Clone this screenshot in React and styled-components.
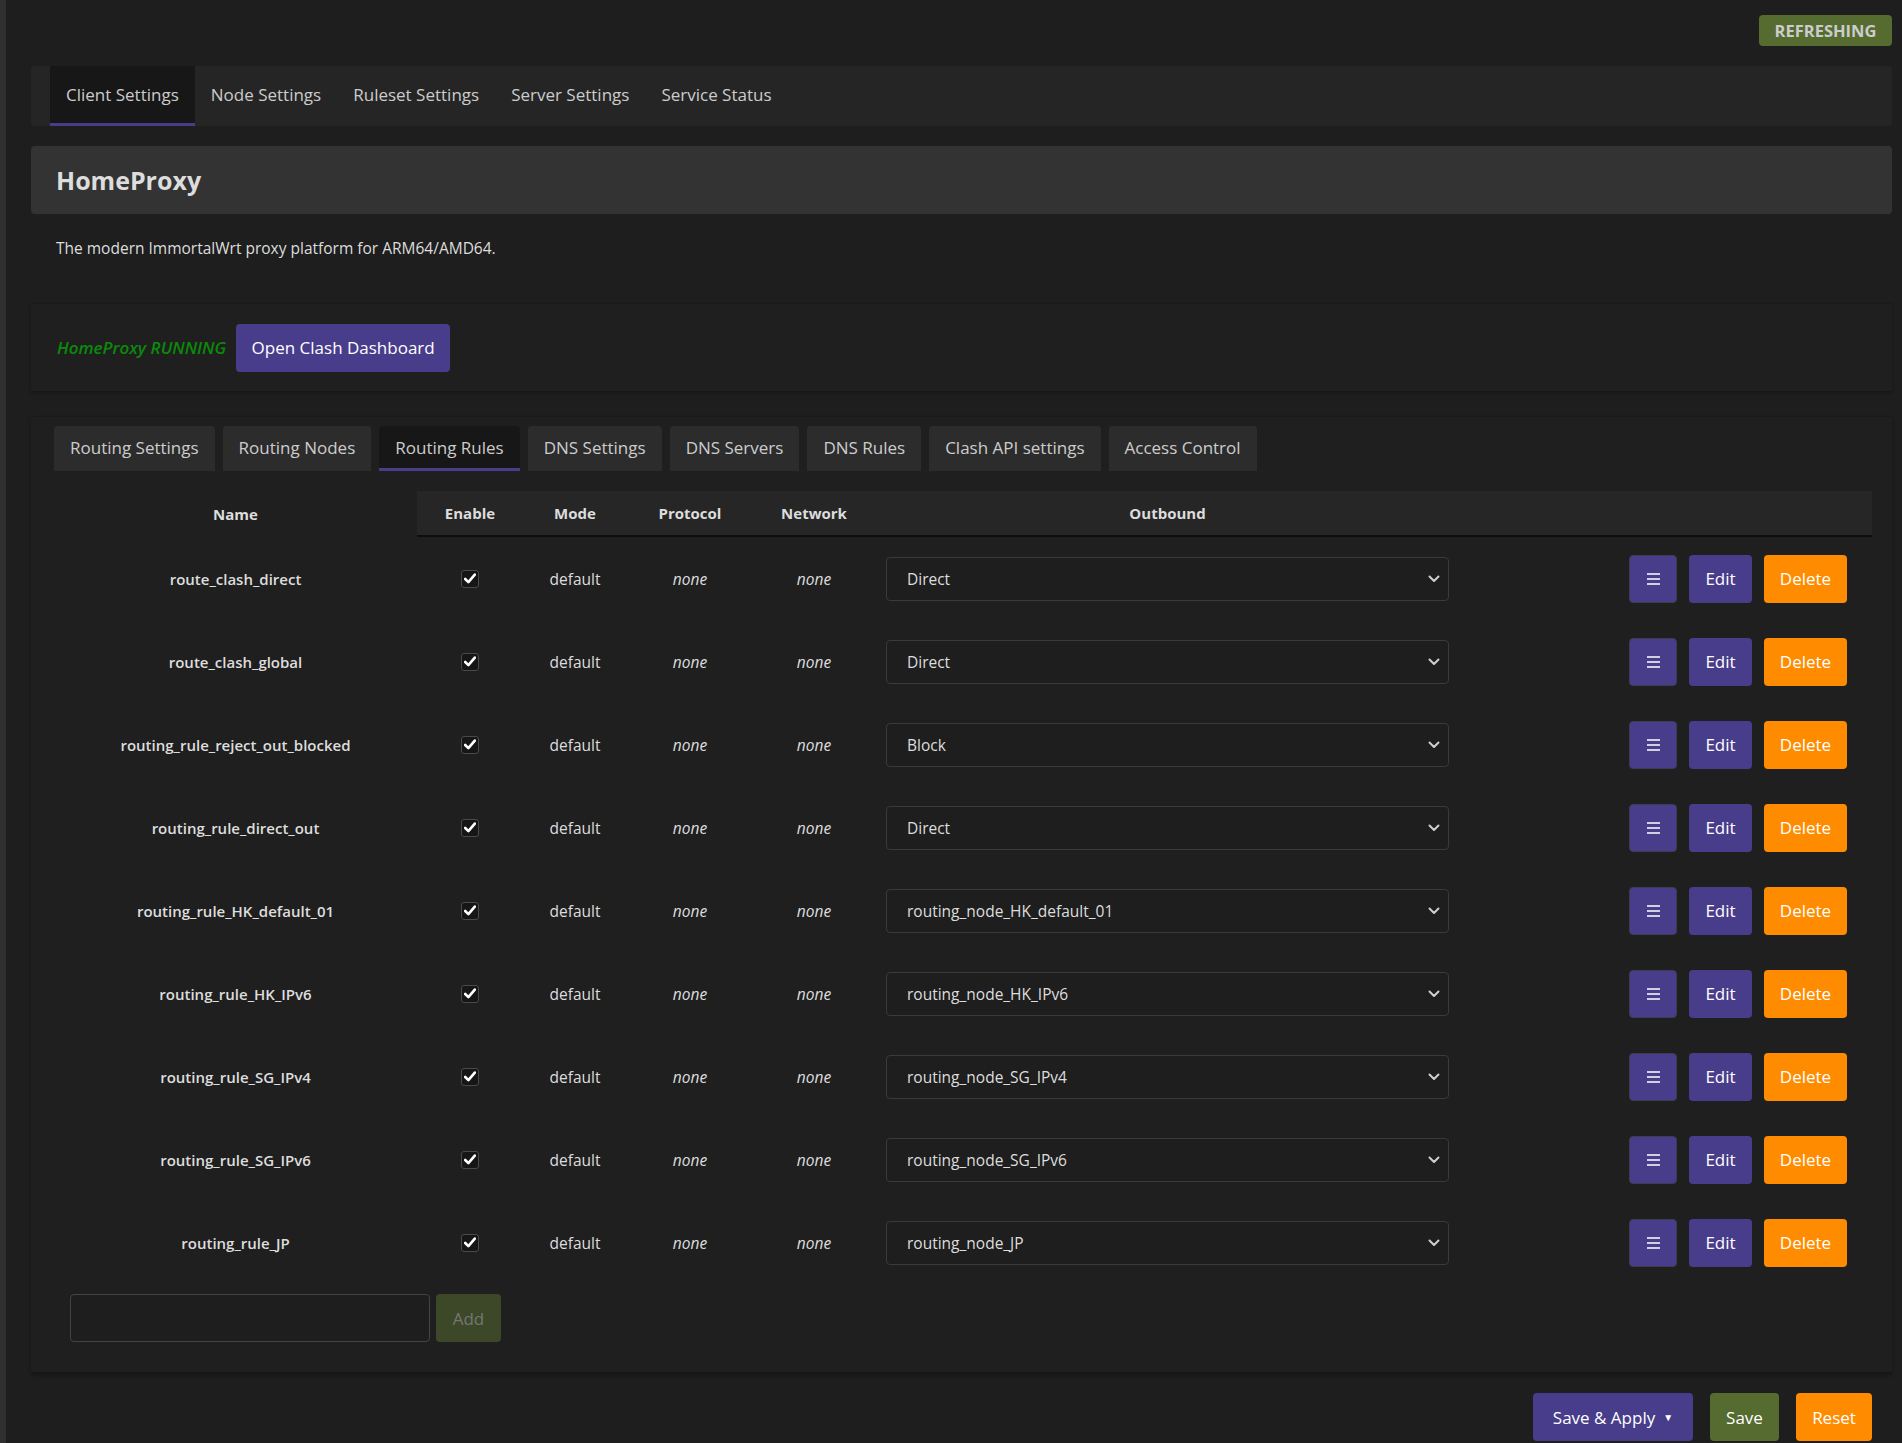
import React from "react";
import styled, { createGlobalStyle } from "styled-components";

const GlobalStyle = createGlobalStyle`
  html, body {
    margin: 0;
    padding: 0;
    background: #1e1e1e;
    color: #dddddd;
    font-family: "Open Sans", Lato, "Noto Sans", sans-serif;
  }
  * { box-sizing: border-box; }
`;

const rules = [
  { name: "route_clash_direct", outbound: "Direct" },
  { name: "route_clash_global", outbound: "Direct" },
  { name: "routing_rule_reject_out_blocked", outbound: "Block" },
  { name: "routing_rule_direct_out", outbound: "Direct" },
  { name: "routing_rule_HK_default_01", outbound: "routing_node_HK_default_01" },
  { name: "routing_rule_HK_IPv6", outbound: "routing_node_HK_IPv6" },
  { name: "routing_rule_SG_IPv4", outbound: "routing_node_SG_IPv4" },
  { name: "routing_rule_SG_IPv6", outbound: "routing_node_SG_IPv6" },
  { name: "routing_rule_JP", outbound: "routing_node_JP" },
];

const topTabs = ["Client Settings", "Node Settings", "Ruleset Settings", "Server Settings", "Service Status"];
const subTabs = [
  "Routing Settings",
  "Routing Nodes",
  "Routing Rules",
  "DNS Settings",
  "DNS Servers",
  "DNS Rules",
  "Clash API settings",
  "Access Control",
];

function App() {
  return (
    <>
      <GlobalStyle />
      <Page>
        <Strip />
        <Main>
          <TopLine>
            <Badge>REFRESHING</Badge>
          </TopLine>

          <TabBar>
            {topTabs.map((t, i) => (
              <TopTab key={t} active={i === 0}>{t}</TopTab>
            ))}
          </TabBar>

          <Header>
            <Title>HomeProxy</Title>
          </Header>
          <Description>The modern ImmortalWrt proxy platform for ARM64/AMD64.</Description>

          <StatusPanel>
            <Running>HomeProxy RUNNING</Running>
            <Button color="#483d8b" w={214}>Open Clash Dashboard</Button>
          </StatusPanel>

          <Panel>
            <SubTabBar>
              {subTabs.map((t, i) => (
                <SubTab key={t} active={i === 2}>{t}</SubTab>
              ))}
            </SubTabBar>

            <Table>
              <HeadRow>
                <NameHead>Name</NameHead>
                <Th>Enable</Th>
                <Th>Mode</Th>
                <Th>Protocol</Th>
                <Th>Network</Th>
                <Th>Outbound</Th>
                <Th />
              </HeadRow>
              {rules.map((r) => (
                <Row key={r.name}>
                  <NameCell>{r.name}</NameCell>
                  <Cell>
                    <CheckBox>
                      <svg width="12" height="11" viewBox="0 0 12 11">
                        <path d="M1.2 6 L4.4 9.2 L10.8 1.6" fill="none" stroke="#fff" strokeWidth="2.6" strokeLinecap="round" strokeLinejoin="round" />
                      </svg>
                    </CheckBox>
                  </Cell>
                  <Cell>default</Cell>
                  <Cell italic>none</Cell>
                  <Cell italic>none</Cell>
                  <Cell>
                    <Select>
                      <span>{r.outbound}</span>
                      <svg width="12" height="8" viewBox="0 0 12 8">
                        <path d="M1.5 1.5 L6 6 L10.5 1.5" fill="none" stroke="#cfcfcf" strokeWidth="2" strokeLinecap="round" strokeLinejoin="round" />
                      </svg>
                    </Select>
                  </Cell>
                  <Actions>
                    <Button color="#483d8b" w={48} bordered>
                      <svg width="15" height="14" viewBox="0 0 15 14">
                        <path d="M1 2 H14 M1 7 H14 M1 12 H14" stroke="#fff" strokeWidth="1.6" />
                      </svg>
                    </Button>
                    <Button color="#483d8b" w={63}>Edit</Button>
                    <Button color="#ff8c00" w={83}>Delete</Button>
                  </Actions>
                </Row>
              ))}
            </Table>

            <AddRow>
              <TextInput />
              <Button color="#556b2f" w={65} dim>Add</Button>
            </AddRow>
          </Panel>

          <Footer>
            <Button color="#483d8b" w={160}>
              Save &amp; Apply <Caret>▼</Caret>
            </Button>
            <Button color="#556b2f" w={69}>Save</Button>
            <Button color="#ff8c00" w={76}>Reset</Button>
          </Footer>
        </Main>
      </Page>
    </>
  );
}

export default App;

const Page = styled.div`
  display: flex;
  min-height: 1443px;
`;

const Strip = styled.div`
  width: 6px;
  background: #2f2f2f;
  flex-shrink: 0;
`;

const Main = styled.div`
  flex: 1;
  padding: 0 10px 0 25px;
`;

const TopLine = styled.div`
  display: flex;
  justify-content: flex-end;
  padding-top: 15px;
  height: 66px;
`;

const Badge = styled.div`
  height: 31px;
  width: 133px;
  display: flex;
  align-items: center;
  justify-content: center;
  background: #556b2f;
  color: #cccccc;
  border-radius: 4px;
  font-weight: 700;
  font-size: 16.5px;
`;

const TabBar = styled.div`
  display: flex;
  height: 60px;
  background: #252525;
  border-radius: 4px;
  padding-left: 19px;
`;

const TopTab = styled.div`
  display: flex;
  align-items: center;
  padding: 0 16px;
  font-size: 17px;
  color: #cccccc;
  background: ${(p) => (p.active ? "#171717" : "transparent")};
  border-bottom: 3px solid ${(p) => (p.active ? "#483d8b" : "transparent")};
`;

const Header = styled.div`
  margin-top: 20px;
  height: 68px;
  background: #333333;
  border-radius: 4px;
  padding-left: 25px;
  display: flex;
  align-items: center;
`;

const Title = styled.h2`
  margin: 0;
  font-size: 25px;
  font-weight: 700;
  color: #dddddd;
`;

const Description = styled.div`
  padding: 23px 0 0 25px;
  height: 89px;
  font-size: 15.5px;
  color: #dddddd;
`;

const StatusPanel = styled.div`
  height: 88px;
  display: flex;
  align-items: center;
  gap: 10px;
  padding-left: 26px;
  background: #1f1f1f;
  border-top: 1px solid #1a1a1a;
  box-shadow: 0 2px 3px rgba(0, 0, 0, 0.25);
  margin-bottom: 25px;
`;

const Running = styled.span`
  color: #0a8a0a;
  font-style: italic;
  font-weight: 600;
  font-size: 17px;
`;

const Button = styled.div`
  height: 48px;
  width: ${(p) => p.w}px;
  display: flex;
  align-items: center;
  justify-content: center;
  gap: 8px;
  background: ${(p) => p.color};
  opacity: ${(p) => (p.dim ? 0.55 : 1)};
  color: ${(p) => (p.dim ? "#bbbbbb" : "#ffffff")};
  border-radius: 4px;
  border: ${(p) => (p.bordered ? "1px solid #3c3c50" : "none")};
  font-size: 17px;
  flex-shrink: 0;
`;

const Caret = styled.span`
  font-size: 10px;
`;

const Panel = styled.div`
  background: #1f1f1f;
  border-top: 1px solid #1a1a1a;
  box-shadow: 0 3px 4px rgba(0, 0, 0, 0.3);
  padding: 9px 20px 30px 23px;
`;

const SubTabBar = styled.div`
  display: flex;
  gap: 8px;
  height: 45px;
`;

const SubTab = styled.div`
  display: flex;
  align-items: center;
  padding: 0 16px;
  font-size: 17px;
  color: #cccccc;
  border-radius: 4px 4px 0 0;
  background: ${(p) => (p.active ? "#171717" : "#2c2c2c")};
  border-bottom: 3px solid ${(p) => (p.active ? "#483d8b" : "transparent")};
`;

const Table = styled.div`
  margin-top: 20px;
  display: grid;
  grid-template-columns: 363px 106px 104px 126px 122px 585px 1fr;
`;

const HeadRow = styled.div`
  display: contents;
`;

const NameHead = styled.div`
  height: 46px;
  display: flex;
  align-items: center;
  justify-content: center;
  font-weight: 700;
  font-size: 15px;
`;

const Th = styled(NameHead)`
  background: #262626;
  border-bottom: 2px solid #0d0d0d;
`;

const Row = styled.div`
  display: contents;
`;

const Cell = styled.div`
  height: 83px;
  display: flex;
  align-items: center;
  justify-content: center;
  font-size: 15.5px;
  font-style: ${(p) => (p.italic ? "italic" : "normal")};
  color: #dddddd;
  padding: 0 11px;
`;

const NameCell = styled(Cell)`
  font-weight: 600;
  font-size: 15px;
`;

const CheckBox = styled.div`
  width: 18px;
  height: 18px;
  border: 1px solid #4a4a4a;
  border-radius: 3px;
  background: #161616;
  display: flex;
  align-items: center;
  justify-content: center;
`;

const Select = styled.div`
  width: 100%;
  height: 44px;
  border: 1px solid #3a3a3a;
  border-radius: 4px;
  background: #1e1e1e;
  display: flex;
  align-items: center;
  justify-content: space-between;
  padding: 0 8px 0 20px;
  font-size: 15.5px;
  color: #dddddd;
`;

const Actions = styled.div`
  height: 83px;
  display: flex;
  align-items: center;
  justify-content: flex-end;
  gap: 12px;
  padding-right: 25px;
`;

const AddRow = styled.div`
  margin-top: 10px;
  padding-left: 16px;
  display: flex;
  gap: 6px;
`;

const TextInput = styled.div`
  width: 360px;
  height: 48px;
  border: 1px solid #444444;
  border-radius: 4px;
  background: #1e1e1e;
`;

const Footer = styled.div`
  display: flex;
  justify-content: flex-end;
  gap: 17px;
  padding: 21px 20px 0 0;
`;
